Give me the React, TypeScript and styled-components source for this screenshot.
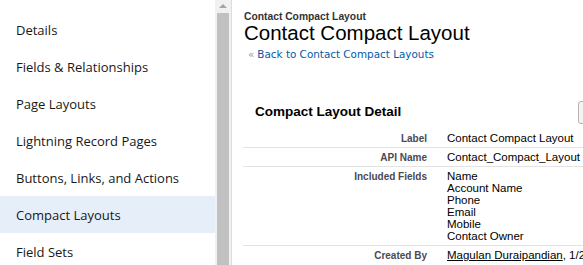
import styled, { createGlobalStyle } from "styled-components";

const GlobalStyle = createGlobalStyle`
  html, body {
    margin: 0;
    padding: 0;
    background: #ffffff;
  }
  * {
    box-sizing: border-box;
  }
`;

const Page = styled.div`
  display: flex;
  width: 583px;
  height: 265px;
  overflow: hidden;
  background: #ffffff;
`;

const Sidebar = styled.nav`
  width: 215px;
  flex-shrink: 0;
  padding-top: 11px;
  display: flex;
  flex-direction: column;
`;

const NavItem = styled.div<{ $active?: boolean }>`
  height: 37px;
  flex-shrink: 0;
  display: flex;
  align-items: center;
  padding-left: 16px;
  font-family: "Open Sans", "Noto Sans", sans-serif;
  font-size: 13px;
  color: #181818;
  background: ${(p) => (p.$active ? "#e6eef9" : "transparent")};
  white-space: nowrap;
`;

const ScrollTrack = styled.div`
  width: 17px;
  flex-shrink: 0;
  background: #f1f1f1;
  border-right: 1px solid #dddddd;
  display: flex;
  flex-direction: column;
  align-items: center;
`;

const ArrowUp = styled.div`
  margin-top: 4px;
  width: 0;
  height: 0;
  border-left: 4px solid transparent;
  border-right: 4px solid transparent;
  border-bottom: 4px solid #a3a3a3;
`;

const Thumb = styled.div`
  margin-top: 5px;
  width: 12px;
  flex: 1;
  background: #c1c1c1;
`;

const Main = styled.main`
  flex: 1;
  min-width: 0;
  overflow: hidden;
  padding: 11px 0 0 12px;
  font-family: "Liberation Sans", Arial, sans-serif;
`;

const Crumb = styled.div`
  font-size: 10.3px;
  font-weight: bold;
  color: #333333;
  line-height: 11px;
  white-space: nowrap;
`;

const PageTitle = styled.h1`
  margin: 0;
  font-size: 20.5px;
  font-weight: normal;
  color: #000000;
  line-height: 22px;
  white-space: nowrap;
`;

const BackLink = styled.div`
  margin: 4px 0 0 4px;
  font-family: "DejaVu Sans", Verdana, sans-serif;
  font-size: 10.4px;
  color: #015ba7;
  line-height: 12px;
  white-space: nowrap;

  span {
    color: #999999;
    margin-right: 3px;
  }
`;

const Detail = styled.section`
  margin: 41px 0 0 -1px;
  width: 600px;
`;

const DetailHeader = styled.div`
  display: flex;
  align-items: flex-start;
  height: 28px;
  padding-left: 12px;
`;

const DetailTitle = styled.h2`
  margin: 3px 0 0;
  font-size: 13.5px;
  font-weight: bold;
  color: #000000;
  line-height: 16px;
  width: 323px;
  white-space: nowrap;
`;

const EditButton = styled.div`
  width: 40px;
  height: 23px;
  border: 1px solid #b5b5b5;
  border-radius: 3px;
  background: #f4f4f4;
`;

const Row = styled.div<{ $last?: boolean }>`
  display: flex;
  padding: 3px 0 2px;
  border-bottom: ${(p) => (p.$last ? "none" : "1px solid #e3e3e3")};
`;

const Label = styled.div`
  width: 184px;
  flex-shrink: 0;
  text-align: right;
  font-size: 10px;
  font-weight: bold;
  color: #4a4a56;
  line-height: 13px;
`;

const Value = styled.div`
  padding-left: 20px;
  font-size: 11.5px;
  color: #000000;
  line-height: 13px;
  white-space: nowrap;
`;

const FieldList = styled.div`
  padding: 0 0 1px 20px;
  font-size: 11.5px;
  color: #000000;
  line-height: 12px;
`;

const UserLink = styled.span`
  text-decoration: underline;
  color: #000000;
`;

const navItems = [
  "Details",
  "Fields & Relationships",
  "Page Layouts",
  "Lightning Record Pages",
  "Buttons, Links, and Actions",
  "Compact Layouts",
  "Field Sets",
];

const includedFields = [
  "Name",
  "Account Name",
  "Phone",
  "Email",
  "Mobile",
  "Contact Owner",
];

export default function App() {
  return (
    <>
      <GlobalStyle />
      <Page>
        <Sidebar>
          {navItems.map((name) => (
            <NavItem key={name} $active={name === "Compact Layouts"}>
              {name}
            </NavItem>
          ))}
        </Sidebar>
        <ScrollTrack>
          <ArrowUp />
          <Thumb />
        </ScrollTrack>
        <Main>
          <Crumb>Contact Compact Layout</Crumb>
          <PageTitle>Contact Compact Layout</PageTitle>
          <BackLink>
            <span>«</span>Back to Contact Compact Layouts
          </BackLink>
          <Detail>
            <DetailHeader>
              <DetailTitle>Compact Layout Detail</DetailTitle>
              <EditButton />
            </DetailHeader>
            <Row>
              <Label>Label</Label>
              <Value>Contact Compact Layout</Value>
            </Row>
            <Row>
              <Label>API Name</Label>
              <Value>Contact_Compact_Layout</Value>
            </Row>
            <Row>
              <Label>Included Fields</Label>
              <FieldList>
                {includedFields.map((f) => (
                  <div key={f}>{f}</div>
                ))}
              </FieldList>
            </Row>
            <Row $last>
              <Label>Created By</Label>
              <Value>
                <UserLink>Magulan Duraipandian</UserLink>, 1/24/2020, 2:12 AM
              </Value>
            </Row>
          </Detail>
        </Main>
      </Page>
    </>
  );
}
